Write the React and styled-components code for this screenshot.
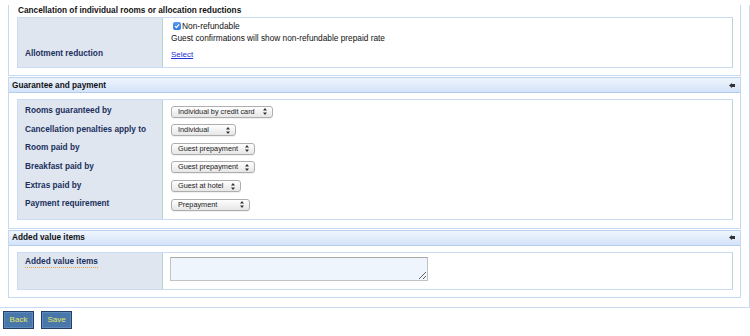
import React from 'react';
import styled, { createGlobalStyle } from 'styled-components';

const Global = createGlobalStyle`
  html, body { margin: 0; padding: 0; background: #fff; }
  body { font-family: "Liberation Sans", Arial, sans-serif; }
`

const Frame = styled.div`
  width: 749px;
  border-right: 1px solid #c9dbf2;
  border-bottom: 1px solid #c9dbf2;
  padding-bottom: 9px;
`

const Section = styled.div`
  margin: ${p => p.first ? '0' : '1px'} 8px 0 8px;
  border: 1px solid #c6d9f2;
  border-top: ${p => p.first ? 'none' : '1px solid #bcd2ee'};
  padding-bottom: ${p => p.pb || 8}px;
`

const Header = styled.div`
  display: flex;
  align-items: center;
  justify-content: space-between;
  height: 14px;
  padding: 0 5px 0 3px;
  background: linear-gradient(#eff5fd, #d3e3f8);
  border-bottom: 1px solid #b3cbec;
  font-size: 8.25px;
  font-weight: bold;
  color: #111;
  margin-bottom: 6px;
`

const SubHeading = styled.div`
  margin: 5px 0 0 9px;
  line-height: 12px;
  font-size: 8.25px;
  font-weight: bold;
  color: #111;
`

const TableBox = styled.div`
  margin: 0 7px 0 8px;
  border: 1px solid #cadcf3;
  border-right-color: #bcd6d8;
  padding: ${p => p.pt || 0}px 0 ${p => p.pb || 0}px 0;
  background: linear-gradient(to right, #dfe6f0 0 144px, #b6d5d5 144px 145px, #fff 145px);
`

const Row = styled.div`
  display: grid;
  grid-template-columns: 145px 1fr;
  align-items: ${p => p.top ? 'start' : 'center'};
  height: ${p => p.h ? `${p.h}px` : 'auto'};
`

const Label = styled.div`
  padding-left: 7px;
  padding-top: ${p => p.pt || 0}px;
  font-size: 8.25px;
  font-weight: bold;
  color: #1b2f5c;
  line-height: 12px;
`

const Hint = styled.span`
  display: inline-block;
  line-height: 11px;
  border-bottom: 1px dotted #eea43a;
`

const Value = styled.div`
  padding-left: 8px;
  font-size: 8.4px;
  color: #111;
  line-height: 12px;
`

const Note = styled.div`
  font-size: 8.3px;
`

const CheckLine = styled.div`
  display: flex;
  align-items: center;
`

const Check = styled.span`
  display: inline-flex;
  align-items: center;
  justify-content: center;
  width: 8px;
  height: 8px;
  margin: 0 1px 0 2px;
  border-radius: 2px;
  background: linear-gradient(#5b9cf0, #2f76dc);
`

const Link = styled.a`
  color: #2433d6;
  text-decoration: underline;
  font-size: 8px;
`

const SelectBox = styled.span`
  display: inline-flex;
  align-items: center;
  justify-content: space-between;
  box-sizing: border-box;
  height: 12px;
  padding: 0 5px 0 6px;
  border: 1px solid #aeaeae;
  border-radius: 3px;
  background: linear-gradient(#ffffff, #e6e6e6);
  box-shadow: 0 1px 0 rgba(0, 0, 0, 0.06);
  font-size: 7.3px;
  color: #222;
  white-space: nowrap;
  vertical-align: middle;
`

const Area = styled.textarea`
  display: block;
  box-sizing: border-box;
  width: 258px;
  height: 24px;
  margin: 4px 0 8px -1px;
  border: 1px solid #c2c2c2;
  border-top-color: #a9a9a9;
  background: #eef5fd;
  resize: both;
  outline: none;
`

const Buttons = styled.div`
  display: flex;
  gap: 7px;
  padding: 3px 0 0 3px;
`

const Btn = styled.button`
  box-sizing: border-box;
  width: 31px;
  height: 18px;
  padding: 0;
  border: 1px solid #243f66;
  background: #4a77aa;
  box-shadow: inset 0 0 0 1px #5e8abd;
  color: #e4e85e;
  font-family: "Liberation Sans", Arial, sans-serif;
  font-size: 8px;
`

const Arrows = () => (
  <svg width="4" height="7" viewBox="0 0 4 7">
    <path d="M2 0 L4 2.6 L0 2.6 Z M0 4.4 L4 4.4 L2 7 Z" fill="#333" />
  </svg>
)

const Collapse = () => (
  <svg width="6" height="5" viewBox="0 0 6 5">
    <path d="M0 2.5 L3 0 L3 5 Z M3 1 L6 1 L6 4 L3 4 Z" fill="#333" />
  </svg>
)

const Select = ({ width, children }) => (
  <SelectBox style={{ width }}>
    <span>{children}</span>
    <Arrows />
  </SelectBox>
)

const payment = [
  ['Rooms guaranteed by', 'Individual by credit card', 102],
  ['Cancellation penalties apply to', 'Individual', 65],
  ['Room paid by', 'Guest prepayment', 84],
  ['Breakfast paid by', 'Guest prepayment', 84],
  ['Extras paid by', 'Guest at hotel', 70],
  ['Payment requirement', 'Prepayment', 79],
]

const App = () => (
  <>
    <Global />
    <Frame>
      <Section first pb={7}>
        <SubHeading>Cancellation of individual rooms or allocation reductions</SubHeading>
        <TableBox pt={2} pb={5}>
          <Row top>
            <Label />
            <Value>
              <CheckLine>
                <Check>
                  <svg width="6" height="6" viewBox="0 0 6 6">
                    <path d="M1 3.2 L2.4 4.6 L5 1.4" stroke="#fff" strokeWidth="1.2" fill="none" />
                  </svg>
                </Check>
                Non-refundable
              </CheckLine>
              <Note>Guest confirmations will show non-refundable prepaid rate</Note>
            </Value>
          </Row>
          <Row h={16} style={{ marginTop: 2 }}>
            <Label>Allotment reduction</Label>
            <Value><Link href="#">Select</Link></Value>
          </Row>
        </TableBox>
      </Section>

      <Section pb={8}>
        <Header>
          <span>Guarantee and payment</span>
          <Collapse />
        </Header>
        <TableBox pt={2} pb={5}>
          {payment.map(([label, value, width]) => (
            <Row key={label} h={18.6}>
              <Label>{label}</Label>
              <Value><Select width={width}>{value}</Select></Value>
            </Row>
          ))}
        </TableBox>
      </Section>

      <Section pb={7}>
        <Header>
          <span>Added value items</span>
          <Collapse />
        </Header>
        <TableBox>
          <Row top>
            <Label pt={3}><Hint>Added value items</Hint></Label>
            <Value><Area /></Value>
          </Row>
        </TableBox>
      </Section>
    </Frame>
    <Buttons>
      <Btn>Back</Btn>
      <Btn>Save</Btn>
    </Buttons>
  </>
);

export default App;
